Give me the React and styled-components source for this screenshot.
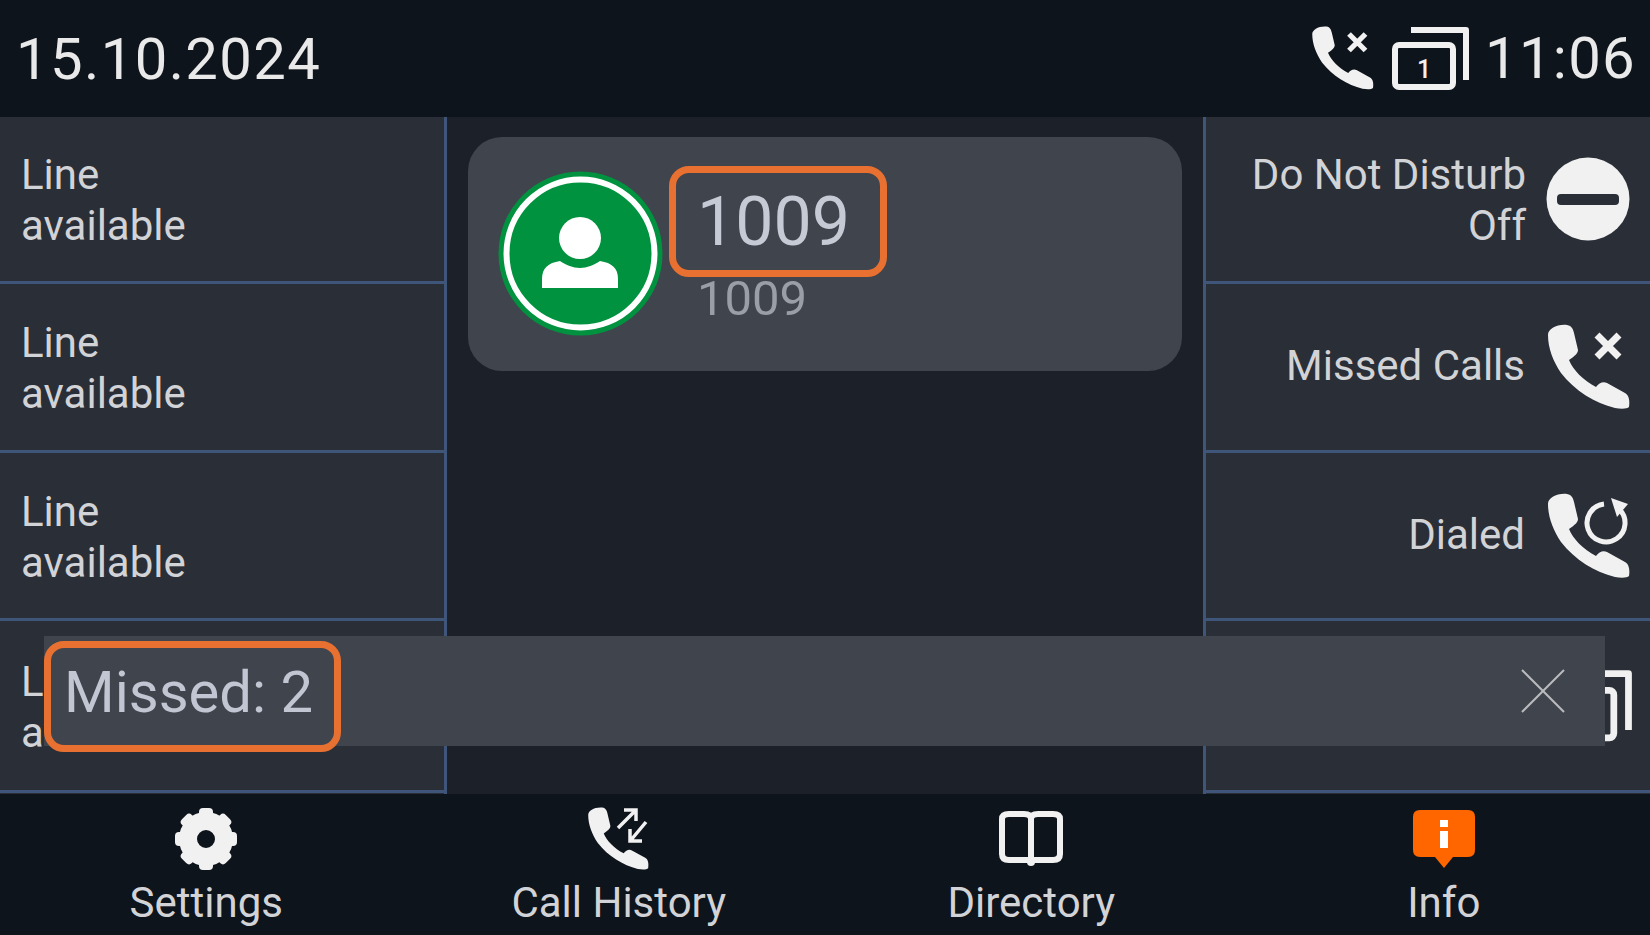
import React from "react";
import styled, { createGlobalStyle } from "styled-components";

const Global = createGlobalStyle`
  html, body { margin: 0; padding: 0; background: #0e141b; }
  * { box-sizing: border-box; }
`;

const Screen = styled.div`
  position: relative;
  width: 1650px;
  height: 935px;
  overflow: hidden;
  display: flex;
  flex-direction: column;
  background: #1c2129;
  font-family: Roboto, "Liberation Sans", sans-serif;
  color: #d6d7d9;
`;
const TopBar = styled.header`
  height: 117px;
  flex: none;
  background: #0e141b;
  display: flex;
  align-items: center;
  justify-content: space-between;
  padding: 0 14px 0 16px;
  font-size: 58px;
  font-weight: 400;
  letter-spacing: 1.4px;
  color: #e9e9e9;
`;
const Status = styled.div`
  display: flex;
  align-items: center;
  gap: 16px;
  margin-top: -1px;
`;
const Clock = styled.span`
  margin-left: -1px;
  letter-spacing: 1.3px;
`;
const Main = styled.main`
  flex: 1;
  display: grid;
  grid-template-columns: 447px 1fr 447px;
  min-height: 0;
`;
const Side = styled.section`
  display: grid;
  grid-template-rows: 167px 169px 168px 172px;
  background: #2a2f37;
  ${(p) => (p.$right ? "border-left: 3px solid #40557a;" : "border-right: 3px solid #40557a;")}
`;
const Row = styled.div`
  display: flex;
  align-items: center;
  justify-content: ${(p) => (p.$right ? "flex-end" : "flex-start")};
  gap: 20px;
  padding: ${(p) => (p.$right ? "0 17px 0 0" : "0 0 0 21px")};
  border-bottom: 3px solid #40557a;
`;
const RowText = styled.div`
  font-size: 42px;
  line-height: 51px;
  padding-bottom: ${(p) => (p.$single ? "3px" : "0")};
  padding-top: ${(p) => (p.$single ? "0" : "2px")};
  color: #d2d3d6;
  text-align: ${(p) => (p.$right ? "right" : "left")};
`;
const Center = styled.section`
  padding: 20px 21px;
`;
const Card = styled.div`
  height: 234px;
  background: #40444c;
  border-radius: 34px;
  display: flex;
  align-items: flex-start;
  padding: 32px 0 0 30px;
`;
const Avatar = styled.svg`
  width: 165px;
  height: 165px;
  margin-top: 2px;
  flex: none;
`;
const CardText = styled.div`
  margin-left: 6px;
  display: flex;
  flex-direction: column;
  margin-top: -3px;
`;
const Highlight = styled.div`
  border: 7px solid #e87030;
  border-radius: 20px;
  display: flex;
  align-items: center;
`;
const NameBox = styled(Highlight)`
  width: 218px;
  height: 111px;
  padding-left: 21px;
  font-size: 68px;
  color: #c6cad4;
`;
const Number = styled.div`
  margin: -7px 0 0 28px;
  font-size: 49px;
  line-height: 58px;
  color: #9a9ea6;
`;
const BottomBar = styled.nav`
  height: 141px;
  flex: none;
  background: #0e141b;
  display: grid;
  grid-template-columns: repeat(4, 1fr);
`;
const NavItem = styled.div`
  display: flex;
  flex-direction: column;
  align-items: center;
  font-size: 42px;
  line-height: 46px;
  color: #d2d3d6;
`;
const NavIcon = styled.div`
  height: 86px;
  padding-top: 3px;
  display: flex;
  align-items: center;
  justify-content: center;
`;
const Toast = styled.div`
  position: absolute;
  left: 44px;
  top: 636px;
  width: 1561px;
  height: 110px;
  background: #40444c;
  display: flex;
  align-items: flex-start;
  justify-content: space-between;
  padding: 5px 40px 0 0;
`;
const MissedBox = styled(Highlight)`
  width: 297px;
  height: 111px;
  padding: 0 0 9px 13px;
  font-size: 58px;
  color: #c2c6d2;
`;
const Close = styled.svg`
  width: 44px;
  height: 44px;
  margin-top: 28px;
`;
const DndSvg = styled.svg`
  width: 84px;
  height: 84px;
  margin-right: 3px;
`;

const PHONE = "M3 12C3 6 12 1 22 2C27 3 28 6 29 10L33 27C33 30 30 33 24 37C28 47 38 57 51 64C54 60 58 58 62 60L80 70C84 72 85 78 84 84C82 86 76 86 70 85C50 80 30 68 16 50C8 38 3 25 3 12Z";
const WHITE = "#f1f1f1";

const MissedIcon = ({ size = 88 }) => (
  <svg width={size} height={size} viewBox="0 0 88 88">
    <path d={PHONE} fill={WHITE} />
    <path d="M52 12L74 34M74 12L52 34" stroke={WHITE} strokeWidth="7" />
  </svg>
);
const DialedIcon = () => (
  <svg width="88" height="88" viewBox="0 0 88 88">
    <path d={PHONE} fill={WHITE} />
    <path d="M74 17A19 19 0 1 1 59 12" fill="none" stroke={WHITE} strokeWidth="5" />
    <path d="M66 6L83 12L72 25Z" fill={WHITE} />
  </svg>
);
const DndIcon = () => (
  <DndSvg viewBox="0 0 84 84">
    <circle cx="42" cy="42" r="41.5" fill={WHITE} />
    <rect x="11" y="37" width="62" height="11" rx="4" fill="#2a2f37" />
  </DndSvg>
);
const WindowsIcon = ({ size = 78, num = "1" }) => (
  <svg width={size} height={size * 64 / 78} viewBox="0 0 78 64">
    <path d="M19 4H74V54" fill="none" stroke={WHITE} strokeWidth="6" strokeLinejoin="round" />
    <rect x="3" y="19" width="58" height="42" rx="4" fill="none" stroke={WHITE} strokeWidth="6" />
    <text x="32" y="52" textAnchor="middle" fontSize="25" fontWeight="500" letterSpacing="0" fill={WHITE} fontFamily="Roboto, sans-serif">{num}</text>
  </svg>
);
const GearIcon = () => (
  <svg width="66" height="66" viewBox="0 0 66 66">
    <circle cx="33" cy="33" r="18" fill="none" stroke={WHITE} strokeWidth="18" />
    {[0, 45, 90, 135, 180, 225, 270, 315].map((a) => (
      <rect key={a} x="26" y="2" width="14" height="14" rx="4" fill={WHITE} transform={`rotate(${a} 33 33)`} />
    ))}
  </svg>
);
const HistoryIcon = () => (
  <svg width="66" height="66" viewBox="0 0 66 66">
    <g transform="scale(0.74 0.74)"><path d={PHONE} fill={WHITE} /></g>
    <path d="M32 22L49 5M38 4H50V15M60 16L45 34M44 23V35H56" fill="none" stroke={WHITE} strokeWidth="3.5" />
  </svg>
);
const BookIcon = () => (
  <svg width="64" height="58" viewBox="0 0 64 58">
    <path d="M32 50H10Q3 50 3 44V9Q3 4 10 4H25Q32 4 32 9V50ZM32 50H54Q61 50 61 44V9Q61 4 54 4H39Q32 4 32 9" fill="none" stroke={WHITE} strokeWidth="6" />
    <circle cx="32" cy="52" r="4" fill={WHITE} />
  </svg>
);
const InfoIcon = () => (
  <svg width="64" height="60" viewBox="0 0 64 60">
    <path d="M8 1H56Q63 1 63 8V41Q63 48 56 48H41L32 59L23 48H8Q1 48 1 41V8Q1 1 8 1Z" fill="#ff6600" />
    <rect x="28" y="11" width="8" height="7" fill="#fff" />
    <rect x="28" y="22" width="8" height="17" fill="#fff" />
  </svg>
);

const lineRows = [0, 1, 2, 3];

export default function App() {
  return (
    <Screen>
      <Global />
      <TopBar>
        <span>15.10.2024</span>
        <Status>
          <MissedIcon size={66} />
          <WindowsIcon />
          <Clock>11:06</Clock>
        </Status>
      </TopBar>
      <Main>
        <Side>
          {lineRows.map((i) => (
            <Row key={i}>
              <RowText>Line<br />available</RowText>
            </Row>
          ))}
        </Side>
        <Center>
          <Card>
            <Avatar viewBox="0 0 165 165">
              <circle cx="82.5" cy="82.5" r="82" fill="#00923f" />
              <circle cx="82.5" cy="82.5" r="74" fill="#00923f" stroke="#fff" strokeWidth="6" />
              <circle cx="82" cy="67" r="21" fill="#fff" />
              <path d="M44 117V108C44 97 50 92 62 90C68 94 75 97 82 97C89 97 96 94 102 90C114 92 120 97 120 108V117Z" fill="#fff" />
            </Avatar>
            <CardText>
              <NameBox>1009</NameBox>
              <Number>1009</Number>
            </CardText>
          </Card>
        </Center>
        <Side $right>
          <Row $right>
            <RowText $right>Do Not Disturb<br />Off</RowText>
            <DndIcon />
          </Row>
          <Row $right>
            <RowText $right $single>Missed Calls</RowText>
            <MissedIcon />
          </Row>
          <Row $right>
            <RowText $right $single>Dialed</RowText>
            <DialedIcon />
          </Row>
          <Row $right>
            <WindowsIcon size={88} num="" />
          </Row>
        </Side>
      </Main>
      <BottomBar>
        <NavItem><NavIcon><GearIcon /></NavIcon>Settings</NavItem>
        <NavItem><NavIcon><HistoryIcon /></NavIcon>Call History</NavItem>
        <NavItem><NavIcon><BookIcon /></NavIcon>Directory</NavItem>
        <NavItem><NavIcon><InfoIcon /></NavIcon>Info</NavItem>
      </BottomBar>
      <Toast>
        <MissedBox>Missed: 2</MissedBox>
        <Close viewBox="0 0 44 44">
          <path d="M1 1L43 43M43 1L1 43" stroke="#b9bbbf" strokeWidth="2" />
        </Close>
      </Toast>
    </Screen>
  );
}
